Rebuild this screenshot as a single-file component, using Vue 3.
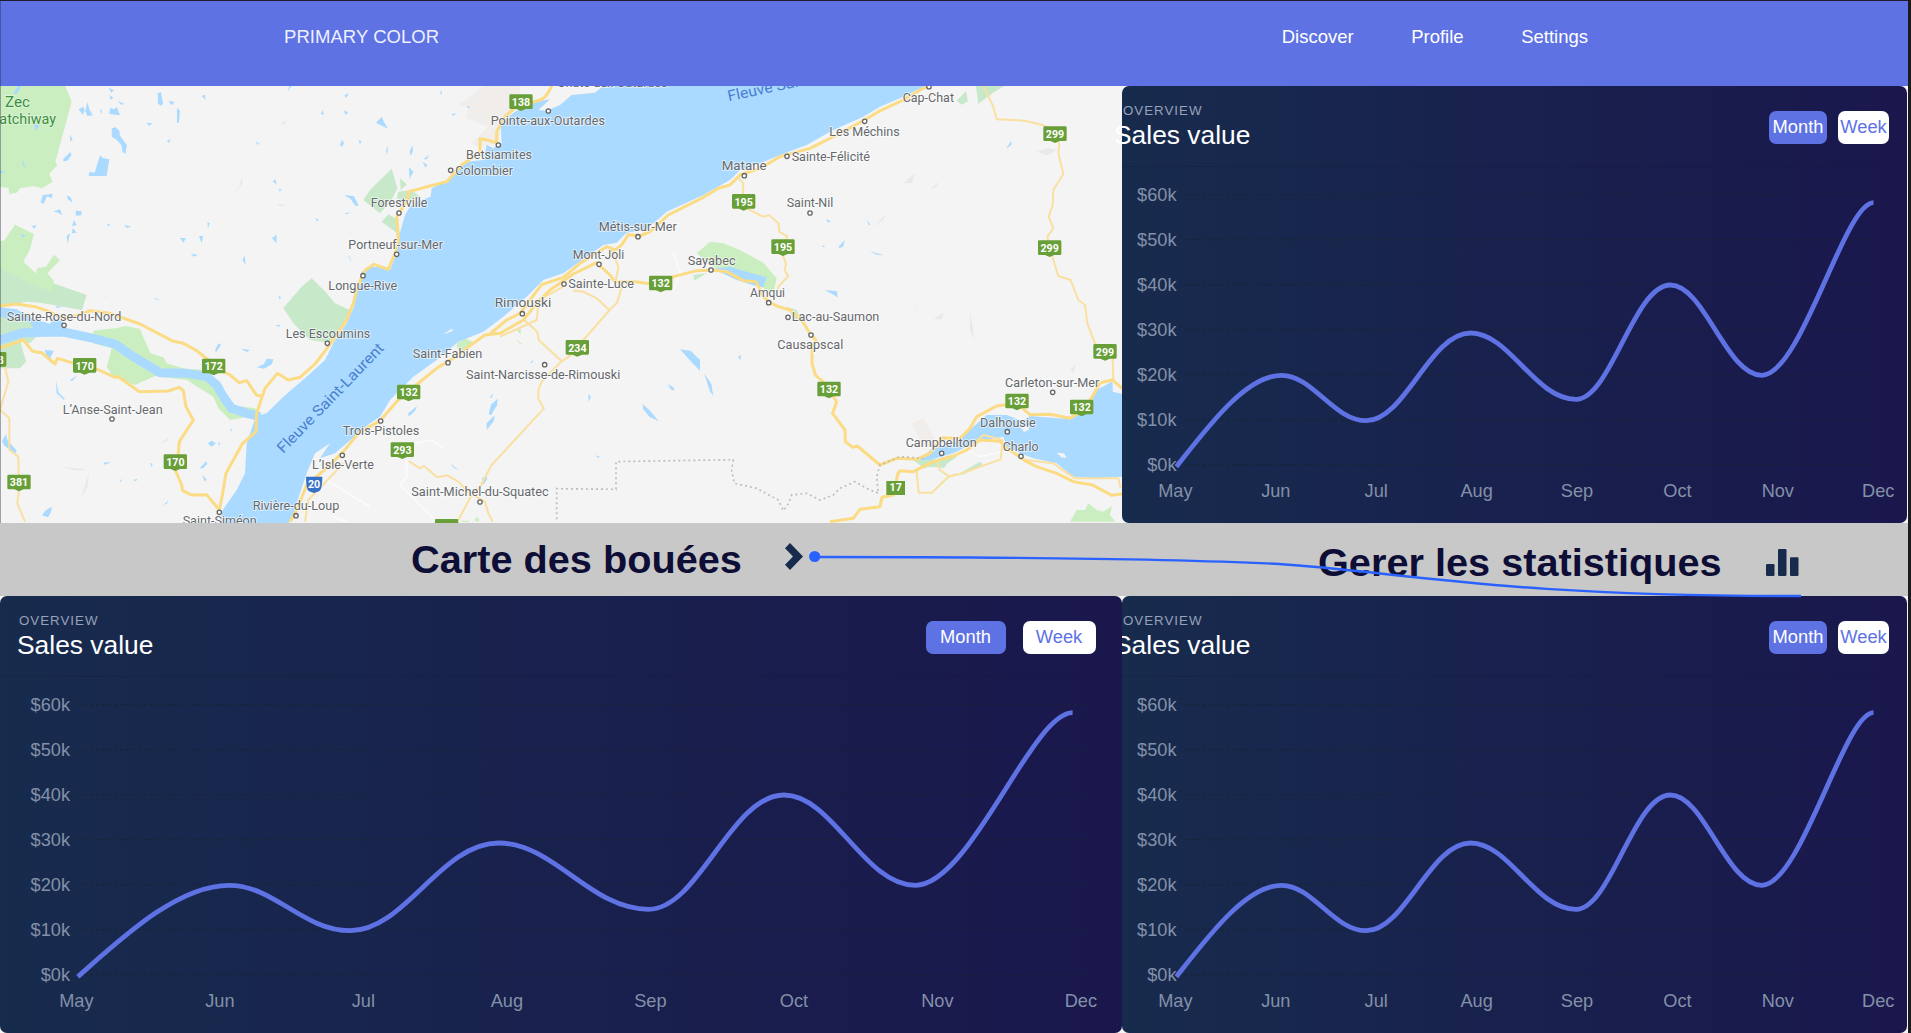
<script setup>
const months = ['May', 'Jun', 'Jul', 'Aug', 'Sep', 'Oct', 'Nov', 'Dec']
const values = ['$60k', '$50k', '$40k', '$30k', '$20k', '$10k', '$0k']

const wide = {
  id: 'wide', width: 1122, labelEnd: 70, first: 76.4, step: 143.5,
  // turning points of the sales curve: May start, peaks and dips, Dec end
  curve: [[77.8, 380.7], [229.2, 289.3], [350.2, 334.7], [498.7, 247], [648.6, 313.3], [784, 199], [915.3, 289.3], [1072.6, 116.7]]
}
const narrow = {
  id: 'narrow', width: 785, labelEnd: 54.5, first: 53.4, step: 100.4,
  curve: [[54.4, 380.7], [159.6, 289.3], [244.4, 334.7], [348.6, 247], [454, 313.3], [548.4, 199], [639.9, 289.3], [751.5, 116.7]]
}

function curvePath(points) {
  const last = points.length - 1
  let d = `M${points[0]}`
  for (let i = 0; i < last; i++) {
    const [x0, y0] = points[i]
    const [x1, y1] = points[i + 1]
    const w = x1 - x0
    if (i === 0) d += `C${x0 + w * 0.3},${y0 - 40} ${x0 + w * 0.66},${y1} ${x1},${y1}`
    else if (i === last - 1) d += `C${x0 + w * 0.35},${y0} ${x0 + w * 0.74},${y1} ${x1},${y1}`
    else d += `C${x0 + w * 0.37},${y0} ${x0 + w * 0.61},${y1} ${x1},${y1}`
  }
  return d
}

// Map geometry is expressed on a 3366 x 1311 canvas.
const lakes = [
  'M335 145l12-3 12 12v12l22 30-5 25-8-4-4-22-14-16-14-8z', 'M300 226l8 8 20 4-8 50h-54l2-12 16 2z',
  'M473 40l10-4 6 35-6 6-9-6z', 'M262 66l6 22 10 18-16 2-6-16z', 'M330 84l14 4 6-8 10 26-32-4z', 'M236 88l14-8 4 12-6 12z',
  'M506 62l18 4-10 10z', 'M531 84l9 8-3 36-6 0z', 'M605 48l10-4 2 16z', 'M440 128l18 2-12 8z', 'M500 184l12-8-4 12z',
  'M352 62l22 10-10 2z', 'M326 24l16 6-8 8z', 'M328 45l12 8-8 6z', 'M300 92l6-4-2 14z', 'M862 36l6-18h6z', 'M1033 46l13-6-7 14z', 'M962 102l6-12 4 14z',
  'M1033 90l12 8-10 6z', 'M765 182l14 10-6 2z', 'M1020 196l6-16 6 8-6 12z', 'M1076 180l8 4-4 10z', 'M210 162l8 18-7 4z', 'M190 236l22-20 2 10-12 16-12 2z',
  'M38 42l16-24h10l-12 22z', 'M100 130l18 6-10 18z', 'M66 238l12 26-10-10z', 'M0 270l18 8-16 2z', 'M122 368l6-22 30-5-3 14-14-6-10 22z', 'M200 346l12 6 6 16-14-10z',
  'M160 394l20-6 7 18-12-8z', 'M227 392l18 2-1 12-16 1z', 'M222 420l8 16-14 2z', 'M218 444l12 14-14 2z', 'M200 468l10-8-7 32z', 'M96 438l14-3-8 12z',
  'M60 462l16 4-8 6z', 'M320 430l10 4-4 6z', 'M372 434l22 6-14 4z', 'M622 428l8 0-6 16z', 'M540 474l18 0-8 14z', 'M597 468l12 0-4 22z', 'M572 522l22 2-12 6z',
  'M728 540l6-14 3 30z', 'M816 474l14-10-1 26z', 'M818 304l8-6 4 16z', 'M836 326l9 3-6 6z', 'M1032 345l30 4 14 28-10 0-14-20z', 'M1034 400l20-3-14 6z', 'M945 414l12 6-7 4z',
  'M1045 524l11 22-9-12z', 'M462 654l22 5-18-1z', 'M168 678l20 2-18 4z', 'M836 646l8 8-7 4z', 'M1130 128l16-14v22z',
  'M1128 128l18-18 4 12 14 24z', 'M1230 210l8-14 0 20-8 12z', 'M1270 238l18-14-8 14z', 'M1158 212l6-16-2 28z', 'M1227 262l10 10-8 28z', 'M1268 245l14 10-6 8z',
  'M1320 38l6-8-2 16z', 'M1355 102l14-2-10 8z', 'M1400 77l12 4-8 4z', 'M1230 278l12-6-10 18z', 'M2475 630l36 4 2 18z',
  'M3022 200l12-18v12l-14 12z', 'M2478 416l14 8-8 4z', 'M2515 500l20-20-6 20-10 4z', 'M2610 514l42 12-22-2z', 'M2600 418l12 18-6-2z', 'M2466 496l10 4-8 2z',
  'M134 810l28 2-10 18 4 12-16-14z', 'M168 902l8 36 18 18-2 4-22-20z', 'M208 902l24-16-14 16z', 'M18 1062l4 18 28 32-4 8-32-22-8-14z', 'M770 862l22-10 8-16 20 2-4 14-24 14z',
  'M724 806l26 4-10 6z', 'M645 812l10-22 8 4-14 22z', 'M624 1090l10-8 14 8-14 10z', 'M655 1090l6-4-4 12z', 'M690 1050l8-6-4 10z', 'M598 1166l20-22 4 8-12 12z',
  'M310 1148l24-2-20 8z', 'M358 1204l10-8-6 10z', 'M400 1200l12-4-4 8z', 'M450 1148l8 4-4 10z', 'M608 1184l12 16-8 4z', 'M126 1306l12-16 18-10-4 18-8 14z', 'M485 1280l22-20-6 10z', 'M826 735l16 0-6 6z',
  'M1225 1000l26-22-6 14-14 14-6 2z', 'M1470 952l8-12-2 14z', 'M1473 974l20-18-2 20-18 30-7-4z', 'M1460 1030l24-24-2 16-22 28z', 'M1590 848l12-10-6 10z', 'M1765 942l8 8-7 16z',
  'M2040 808l32 4 28 28 0 32-26-26z', 'M2112 880l22 32 6 36-10-14z', 'M2004 912l16 10 4 10-12-4z', 'M1928 972l22 20 26 32-28-14-18-22z', 'M2214 832l8-8v16z', 'M1786 1126l14 4-6 4z',
  'M1350 1150l26 20-14-6z', 'M1446 1196l12-10 4 10-12 18z'
]
const woods = [
  'M0 565L60 590 160 610 260 645 246 690 190 680 130 670 80 665 0 680z', 'M850 684L905 620 935 595 980 640 1005 670 1050 690 1000 790 930 780 880 730z',
  'M1110 330L1175 266 1192 325 1175 360 1140 400 1090 360z', 'M1200 295l20 18-18 18z', 'M1195 335l40-5 25 20-40 15-30-10z', 'M1145 425l20-22 30 18 5 45z',
  'M0 680L80 700 120 760 90 790 60 780 78 845 60 865 0 865z', 'M250 700l0-40 240 8z', 'M2870 62l28-28 6 30-18 10z', 'M2928 18l84 0-35 22-42 32z', 'M2080 585l40-5-38 22z',
  'M2360 680l30 10 15 35-25-10z', 'M2770 1160l-28-18 68-4 40-12 22 4-30 20-10 14-20-2z', 'M2740 1140l52-12 12 18-30 20z', 'M2880 1180l60-35 8 8-60 32z'
].filter((d) => !d.startsWith('M250'))
const parks = [
  'M0 18H196L215 65 166 246 172 254 148 282 158 305 125 325 100 318 60 325 50 338 28 342 25 324 0 320z',
  'M0 482h12L45 434 102 462 90 508 70 545 108 580 112 564 138 560 162 524 180 540 142 580 162 602 156 635 110 620 50 590 0 565z',
  'M280 752L350 744 375 738 420 746 436 786 452 820 490 832 500 850 560 868 600 868 650 900 660 930 690 975 765 985 775 1005 690 1020 655 985 640 950 560 900 465 888 405 915 340 890 320 862 335 805 280 790z',
  'M2090 520L2130 485 2170 490 2220 510 2290 548 2330 595 2320 640 2285 622 2220 590 2140 560z',
  'M3210 1325L3230 1290 3255 1290 3265 1270 3290 1290 3310 1295 3336 1278 3330 1305 3346 1325z',
  'M1370 790l25-15 26 12-20 12-10 10-18 0z', 'M1550 750l12-5 0 20z', 'M1548 776l18 16-6 0z', 'M765 1270l20-25-5 40-30 40h-12z', 'M1424 1316l10-4 4 12h-12z', 'M1385 1322l22 0v4h-22z'
]
const trunk = [
  'M1655 18Q1640 50 1625 58L1600 66 1560 70 1515 110 1490 155 1490 188 1462 180 1440 176 1440 215 1385 255 1340 305 1290 318 1226 335 1222 360 1190 410 1195 480 1185 520 1165 568 1122 553 1096 570 1072 620 1060 670 1040 720 985 800 945 852 900 892 865 900 832 880 795 925 770 1000 768 1055 728 1090 678 1180 668 1240 656 1300',
  'M0 678L50 672 105 680 140 692 190 716 240 704 270 692 330 700 420 732 520 784 550 790 590 812 625 840 640 860 690 885 718 908 740 902 770 946 785 948',
  'M0 804L70 780 98 814 125 818 165 852 172 835 215 848 270 858 345 892 355 890 418 935 505 933 538 922 550 932 558 980 580 1020 538 1085 534 1130 526 1170 545 1215 548 1232 575 1245 620 1244 658 1290',
  'M870 1325L890 1290 920 1215 985 1160 1030 1115 1075 1060 1140 1022 1190 965 1230 930 1310 865 1360 835 1420 790 1455 765 1500 760 1570 720 1610 670 1650 630 1720 582 1790 548 1830 585 1844 605 1905 605 1980 615 2020 590 2090 572 2135 570 2180 575 2230 602 2268 605 2290 650 2310 668 2335 680 2370 690 2405 720 2433 765 2448 780 2436 800 2436 850 2446 885 2480 915 2510 965 2498 1000 2535 1050 2536 1085 2558 1102 2572 1098 2640 1155 2690 1135 2750 1138 2790 1120 2825 1074 2880 1075 2910 1045 2930 1010 2990 978 3050 970 3090 1004 3150 1003 3210 1015 3250 990 3280 945 3300 908 3338 900 3366 925',
  'M1470 762L1520 720 1560 700 1605 640 1625 614 1690 592 1740 550 1820 500 1846 510 1865 495 1885 464 1920 468 1950 455 2005 405 2110 352 2155 325 2190 315 2220 285 2280 265 2340 230 2430 205 2510 165 2585 125 2635 95 2710 60 2760 30 2785 18',
  'M2490 1325L2560 1315 2580 1288 2640 1280 2646 1252 2680 1245 2694 1180 2700 1172 2740 1175 2800 1145 2860 1128 2900 1110 2940 1080 3000 1084 3020 1104 3080 1145 3110 1160 3170 1180 3220 1205 3275 1214 3336 1246 3366 1242'
]
const roads = [
  'M2950 18L2980 80 2990 118 3075 122 3130 136 3165 150 3178 195 3175 220 3190 282 3160 330 3158 375 3146 410 3160 445 3142 470 3149 505 3175 588 3212 600 3235 660 3255 675 3262 730 3285 790 3338 830 3340 900',
  'M2212 290L2230 310 2228 365 2240 385 2290 410 2308 406 2335 430 2338 455 2362 470 2345 500 2350 530 2358 550 2354 572 2365 588 2335 620 2330 640',
  'M1720 632L1750 635 1790 655 1828 690 1850 670 1860 640 1868 610M1835 510L1855 560 1848 600', 'M1829 690L1750 780 1720 820 1680 848 1625 905 1615 930 1615 958 1632 985 1475 1155 1440 1220 1412 1250 1375 1320',
  'M1570 718L1612 755 1616 780 1684 842', 'M1226 1143L1260 1165 1272 1158 1312 1192 1342 1186 1375 1205 1410 1240 1455 1265 1465 1300 1478 1325',
  'M15 860L25 905 0 990 28 1015 28 1110 55 1130 57 1230 52 1270 75 1325', 'M2750 1175L2756 1238 2796 1238 2845 1190 2880 1182 3002 1138 3008 1080 2950 1065 2930 1082', 'M2808 1140L2820 1170 2848 1190 2870 1182',
  'M3080 1140L3160 1150 3225 1195 3355 1195 3362 1225', 'M915 1325L925 1260 1030 1150', 'M1500 770L1610 720 1616 660 1690 620'
]
const faint = 'M1220 1140v50l-20 25 100 100M2020 520l20 60-20 50M1245 1090l50-10 35 25M980 1200l130 80M2900 1110l40 20 90-20M1000 1310l40 15'
const relief = 'M700 345l25-30 5-25-8 12-4 16zM2555 470l65-30 40-40-10 20-30 20zM2710 310l35-30-10 30zM2790 330l25-25-5 15zM3110 215l35-12 25 8-30 15zM240 1260l20-60 8-20-6 40zM180 1160l80 8-30 4zM305 635l25 28-12-10zM830 372l32 2-20 6zM840 130l20-8-5 12zM2910 690v60l14 30zM2800 718l30-20-4 20zM3210 870l18-20-8 28zM480 1090l30-20-12 16zM2740 650l10 50-4-10z'

const places = [
  ['Chute-aux-Outardes', 1672, 22, 330], ['Pointe-aux-Outardes', 1472, 135, 343], ['Betsiamites', 1398, 238, 198], ['Colombier', 1366, 285, 173],
  ['Forestville', 1112, 382, 170], ['Portneuf-sur-Mer', 1045, 508, 284], ['Longue-Rive', 985, 629, 207], ['Les Escoumins', 857, 775, 254],
  ['Sainte-Rose-du-Nord', 20, 722, 344], ['L’Anse-Saint-Jean', 188, 1003, 300], ['Mont-Joli', 1718, 538, 155], ['Métis-sur-Mer', 1796, 454, 234],
  ['Sainte-Luce', 1705, 624, 197], ['Rimouski', 1484, 682, 170], ['Sayabec', 2063, 555, 144], ['Matane', 2165, 270, 135], ['Cap-Chat', 2708, 66, 154],
  ['Les Méchins', 2488, 168, 211], ['Sainte-Félicité', 2375, 243, 235], ['Saint-Nil', 2360, 382, 140], ['Amqui', 2250, 652, 105],
  ['Lac-au-Saumon', 2375, 724, 263], ['Causapscal', 2332, 808, 198], ['Carleton-sur-Mer', 3015, 921, 283], ['Dalhousie', 2940, 1040, 167],
  ['Campbellton', 2717, 1102, 213], ['Charlo', 3008, 1114, 108], ['Saint-Fabien', 1238, 833, 209], ['Saint-Narcisse-de-Rimouski', 1398, 896, 463],
  ['Trois-Pistoles', 1028, 1066, 230], ['L’Isle-Verte', 936, 1168, 186], ['Rivière-du-Loup', 758, 1291, 260], ['Saint-Siméon', 548, 1336, 222],
  ['Saint-Michel-du-Squatec', 1234, 1249, 412]
]
const dots = [[1645, 93], [1495, 195], [1352, 271], [1197, 399], [1190, 523], [1089, 587], [982, 790], [192, 736], [336, 1017], [1797, 553], [1914, 470], [1692, 612], [1567, 701], [2133, 570], [2233, 287], [2787, 20], [2594, 124], [2361, 229], [2430, 399], [2306, 668], [2364, 712], [2433, 765], [3158, 937], [3022, 1055], [2825, 1120], [3063, 1129], [1344, 848], [1634, 854], [1142, 1023], [1027, 1126], [888, 1307], [658, 1297], [1440, 1266]]
const shields = [
  ['138', 1563, 67], ['195', 2231, 366], ['195', 2349, 502], ['299', 3165, 163], ['299', 3149, 505], ['132', 1982, 611], ['170', 254, 858], ['172', 641, 860],
  ['170', 526, 1147], ['381', 57, 1208], ['138', -16, 840], ['234', 1732, 804], ['132', 1226, 938], ['293', 1207, 1111], ['132', 2487, 929],
  ['132', 3051, 965], ['132', 3245, 983], ['299', 3315, 816], ['', 1340, 1341]
]
</script>

<template>
  <div class="page">
    <header class="nav">
      <span class="brand">PRIMARY COLOR</span>
      <nav class="links">
        <a>Discover</a><a>Profile</a><a>Settings</a>
      </nav>
    </header>

    <section class="row">
      <svg class="map" viewBox="0 18 3366 1311" preserveAspectRatio="none">
        <rect y="18" width="3366" height="1311" fill="#f4f4f4" />
        <path d="M1375 75L1450 18H1560V70L1500 150 1500 190 1430 200 1415 190 1465 140 1400 115 1405 80zM2735 1030l35-15 40 70-35 25z" fill="#f1edea" />
        <path :d="relief" fill="#e9e9e9" />
        <path v-for="d in woods" :key="d" :d="d" fill="#c8e8ca" />
        <path v-for="d in parks" :key="d" :d="d" fill="#cbeec1" />
        <g fill="#aadaff">
          <path d="M1810 18L1785 38 1715 45 1680 75 1640 92 1615 90 1650 58 1600 66 1545 95 1502 130 1505 190 1480 205 1460 195 1450 240 1400 245 1370 270 1345 300 1295 325 1292 350 1250 365 1230 380 1215 405 1205 440 1192 490 1188 525 1170 570 1140 562 1110 560 1085 575 1072 630 1062 680 1040 730 1000 790 975 840 920 890 850 950 800 1000 768 1008 740 1090 735 1180 710 1230 668 1290 660 1329H866L880 1300 900 1240 920 1180 945 1120 990 1090 960 1135 1005 1120 1040 1090 1110 1030 1140 1010 1170 960 1240 890 1310 840 1375 785 1450 755 1510 710 1580 650 1630 600 1690 580 1760 530 1810 495 1850 488 1880 458 1940 448 2000 395 2110 345 2190 300 2220 270 2280 250 2340 225 2420 195 2500 150 2590 110 2640 80 2710 50 2775 18z" />
          <path d="M2760 1140L2790 1110 2880 1080 2920 1040 2960 1005 3020 1005 3070 1025 3090 1008 3210 1018 3260 990 3290 930 3335 905 3366 925V1190L3280 1195 3220 1190 3170 1150 3100 1135 3060 1120 3020 1100 3010 1070 2960 1080 2920 1090 2860 1120 2790 1140z" />
          <path d="M0 682l50 6 40 24 60 20 10-20 30 14-10 22-50 10-30-12-10-20-90-16z" />
          <path d="M2140 566l50-6 60 18 50 14-10 30-30-6-50-16z" />
          <path v-for="d in lakes" :key="d" :d="d" />
        </g>
        <path d="M0 780L70 758 190 756 280 775 345 792 400 830 450 860 480 878 560 880 620 890 650 915 670 950 695 985 740 1000 780 1010" fill="none" stroke="#aadaff" stroke-width="27" stroke-linejoin="round" />
        <path d="M1335 760l20-14 4 6-24 10zM3060 1040l28-4-2 14-14 6zM3170 1118l22 2 8 14-16-2zM3338 905l28 22v14l-28-6z" fill="#f4f4f4" />
        <path :d="faint" fill="none" stroke="#fbfbfb" stroke-width="5" />
        <g class="roads">
          <path v-for="d in roads" :key="d" :d="d" stroke-width="6" stroke="#fae0a0" />
          <path v-for="d in trunk" :key="d" :d="d" stroke-width="9" stroke="#fbdb83" />
        </g>
        <path class="border" d="M1670 1318V1226L1848 1228V1145L2200 1139 2195 1170 2203 1210 2270 1225 2335 1260 2350 1292 2366 1270 2375 1245 2420 1240 2460 1260 2500 1245 2520 1225 2565 1205 2600 1225 2635 1240 2630 1190 2640 1155 2700 1130 2770 1135" />
        <circle v-for="(p, i) in dots" :key="i" :cx="p[0]" :cy="p[1]" r="6.5" class="town" />
        <text v-for="p in places" :key="p[0]" :x="p[1]" :y="p[2]" :textLength="p[3]" lengthAdjust="spacingAndGlyphs" class="place">{{ p[0] }}</text>
        <text x="15" y="80" textLength="75" lengthAdjust="spacingAndGlyphs" class="zec">Zec</text>
        <text x="-2" y="131" textLength="170" lengthAdjust="spacingAndGlyphs" class="zec">atchiway</text>
        <text transform="translate(850 1122) rotate(-46)" textLength="438" lengthAdjust="spacingAndGlyphs" class="river">Fleuve Saint-Laurent</text>
        <text transform="translate(2186 64) rotate(-12)" textLength="430" lengthAdjust="spacingAndGlyphs" class="river">Fleuve Saint-Laurent</text>
        <g v-for="(s, i) in shields" :key="'s' + i" :transform="`translate(${s[1]} ${s[2]})`">
          <path d="M-31-24h62q4 0 4 4v36q0 4-4 4H14L0 26-14 20H-31q-4 0-4-4v-36q0-4 4-4z" fill="#689f38" />
          <text y="11" class="route">{{ s[0] }}</text>
        </g>
        <path d="M2659 1203h56v42h-56z" fill="#689f38" />
        <text x="2687" y="1234" class="route">17</text>
        <path d="M918 1190h49q0 38-10 44l-15 5-15-5q-9-6-9-44z" fill="#3571c6" />
        <text x="942" y="1225" class="route">20</text>
      </svg>

      <article v-for="p in [narrow]" :key="p.id" class="card narrow">
        <div class="head">
          <div class="titles"><small>OVERVIEW</small><h3>Sales value</h3></div>
          <div class="toggle"><button class="on">Month</button><button>Week</button></div>
        </div>
        <svg class="chart" :viewBox="`0 81 ${p.width} 356`">
          <path class="grid" :d="values.map((v, i) => `M${p.labelEnd + 8} ${108.7 + i * 45}H${p.width - 33}`).join('')" />
          <text v-for="(v, i) in values" :key="v" :x="p.labelEnd" :y="114.6 + i * 45.05" text-anchor="end">{{ v }}</text>
          <text v-for="(m, i) in months" :key="m" :x="p.first + i * p.step" y="411" text-anchor="middle">{{ m }}</text>
          <path class="line" :d="curvePath(p.curve)" />
        </svg>
      </article>
    </section>

    <section class="captions">
      <div class="caption left">
        <h2>Carte des bouées</h2>
        <svg class="chevron" viewBox="0 0 18 27"><path d="M5 0L18 13.5 5 27 0 21.7 8 13.5 0 5.3z" fill="#172b4d" /></svg>
      </div>
      <div class="caption right">
        <h2>Gerer les statistiques</h2>
        <svg class="bars" viewBox="0 0 33 27" fill="#172b4d">
          <rect y="15" width="8.5" height="12" rx="1.2" /><rect x="12" width="8.5" height="27" rx="1.2" /><rect x="24" y="8.3" width="8.5" height="18.7" rx="1.2" />
        </svg>
      </div>
      <svg class="connector" viewBox="0 0 1000 48">
        <path d="M10 8.5C195 8.5 365 10 475 15.5C595 23 695 48 997 47.5" transform="translate(-5 -1.5)" fill="none" stroke="#2962ff" stroke-width="2.4" />
        <circle cx="5.7" cy="6.5" r="5.6" fill="#2962ff" />
      </svg>
    </section>

    <section class="row">
      <article v-for="p in [wide, narrow]" :key="p.id" class="card" :class="p.id">
        <div class="head">
          <div class="titles"><small>OVERVIEW</small><h3>Sales value</h3></div>
          <div class="toggle"><button class="on">Month</button><button>Week</button></div>
        </div>
        <svg class="chart" :viewBox="`0 81 ${p.width} 356`">
          <path class="grid" :d="values.map((v, i) => `M${p.labelEnd + 8} ${108.7 + i * 45}H${p.width - 33}`).join('')" />
          <text v-for="(v, i) in values" :key="v" :x="p.labelEnd" :y="114.6 + i * 45.05" text-anchor="end">{{ v }}</text>
          <text v-for="(m, i) in months" :key="m" :x="p.first + i * p.step" y="411" text-anchor="middle">{{ m }}</text>
          <path class="line" :d="curvePath(p.curve)" />
        </svg>
      </article>
    </section>
  </div>
</template>

<style>
body { margin: 0; overflow: hidden; background: #1b1b1f; }
</style>

<style scoped>
.page {
  position: relative;
  box-sizing: border-box;
  width: 1908px;
  height: 1033px;
  overflow: hidden;
  border-top: 1px solid #1d1d2b;
  background: #f4f4f4;
  font-family: "Liberation Sans", Arial, sans-serif;
}
.page::after {
  content: "";
  position: absolute;
  left: 0;
  top: 0;
  width: 1px;
  height: 595px;
  background: rgba(40, 40, 60, 0.4);
}
.nav {
  display: flex;
  justify-content: space-between;
  box-sizing: border-box;
  height: 85px;
  padding: 23px 320px 0 284px;
  background: #5e72e4;
  color: #eef0ff;
  font-size: 18.5px;
  line-height: 25px;
}
.brand { letter-spacing: 0.05px; }
.links { display: flex; gap: 57.5px; color: #fff; }
.row { display: flex; height: 437px; }
.map { flex: none; width: 1122px; height: 437px; }
.roads path { fill: none; stroke-linejoin: round; }
.border { fill: none; stroke: #bdbdbd; stroke-width: 5; stroke-dasharray: 6 9; }
.town { fill: #fff; stroke: #666; stroke-width: 4; }
.place, .zec, .river, .route { font-family: Roboto, sans-serif; }
.place { font-size: 37px; fill: #66696c; stroke: #fff; stroke-width: 5; stroke-opacity: 0.7; paint-order: stroke; }
.zec { font-size: 44px; fill: #388e3c; stroke: #e4f6df; stroke-width: 4; paint-order: stroke; }
.river { font-size: 45px; fill: #4a7fcf; }
.route { font-size: 32px; font-weight: 700; fill: #fff; text-anchor: middle; }
.card {
  display: flex;
  flex-direction: column;
  flex: none;
  height: 437px;
  border-radius: 7px;
  background: linear-gradient(90deg, #172b4d, #1a174d);
}
.wide { position: relative; z-index: 1; width: 1122px; }
.narrow { width: 785px; }
.head {
  display: flex;
  justify-content: space-between;
  box-sizing: border-box;
  height: 81px;
  padding: 17px 26.5px 0 19px;
  border-bottom: 1px solid rgba(20, 20, 50, 0.25);
}
.narrow .head { padding: 17px 18px 0 1px; }
.titles small { display: block; color: #98a1b8; font-size: 13.3px; line-height: 16px; letter-spacing: 1px; }
.titles h3 { margin: 0 0 0 -2px; color: #fff; font-size: 26.4px; font-weight: 400; line-height: 32px; }
.narrow h3 { margin-left: -9px; }
.toggle { display: flex; gap: 17px; padding-top: 7.5px; }
.toggle button {
  width: 73px;
  height: 33.5px;
  padding: 0;
  border: 0;
  border-radius: 7px;
  background: #fff;
  color: #5e72e4;
  font: 18.3px "Liberation Sans", Arial, sans-serif;
}
.toggle .on { width: 80px; background: #5e72e4; color: #fff; }
.narrow .toggle { gap: 11px; }
.narrow .toggle button { width: 51px; }
.narrow .toggle .on { width: 58px; }
.chart { flex: none; width: 100%; height: 356px; }
.chart text { fill: #8390a8; font-size: 18.2px; }
.grid { stroke: #1b2333; stroke-width: 1; stroke-dasharray: 3 3; }
.line { fill: none; stroke: #5e72e4; stroke-width: 4.8; }
.captions {
  position: relative;
  z-index: 2;
  display: flex;
  height: 73px;
  background: #c8c8c8;
}
.caption { display: flex; align-items: flex-start; box-sizing: border-box; }
.left { width: 1122px; padding: 13px 0 0 411px; }
.right { padding: 16px 0 0 196px; }
h2 { margin: 0; color: #0d0d36; font-size: 39.7px; line-height: 46px; white-space: nowrap; }
.chevron { width: 18px; height: 27px; margin: 7px 0 0 43px; }
.bars { width: 33px; height: 27px; margin: 10px 0 0 44px; }
.connector { position: absolute; left: 809px; top: 27px; width: 1000px; height: 48px; overflow: visible; }
</style>
